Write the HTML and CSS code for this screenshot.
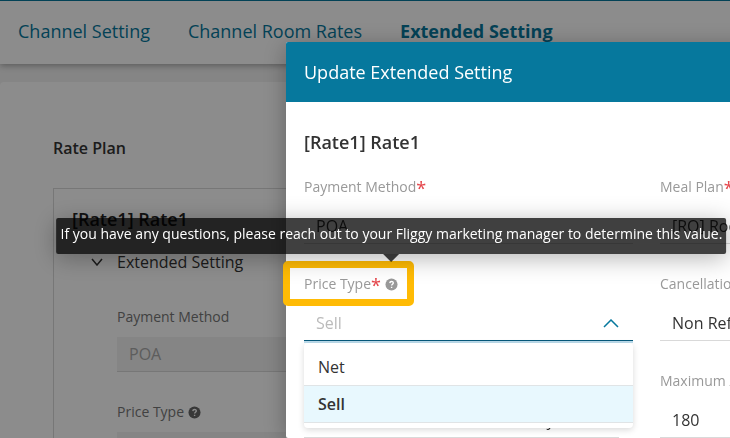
FILE: index.html
```html
<!DOCTYPE html>
<html lang="en">
<head>
    <meta charset="UTF-8">
    <meta name="viewport" content="width=device-width, initial-scale=1.0">
    <title>Extended Setting</title>
    <link rel="stylesheet" href="styles.css">
</head>
<body>
    <nav class="tabs">
        <a href="#channel">Channel Setting</a>
        <a href="#rates">Channel Room Rates</a>
        <a href="#extended" class="active">Extended Setting</a>
    </nav>

    <main class="content">
        <h2 class="section-title">Rate Plan</h2>
        <section class="panel">
            <h3 class="panel-title">[Rate1] Rate1</h3>
            <button type="button" class="collapse">
                <svg width="12" height="8" viewBox="0 0 12 8"><path d="M1 1l5 6 5-6" /></svg>
                Extended Setting
            </button>
            <div class="panel-body">
                <div class="field">
                    <label for="plan-payment">Payment Method</label>
                    <input type="text" id="plan-payment" value="POA" disabled>
                </div>
                <div class="field">
                    <div class="label-row">
                        <label for="plan-price">Price Type</label>
                        <svg class="help" viewBox="0 0 14 14"><circle cx="7" cy="7" r="6.5" /><path d="M5.2 5.5c.1-2.4 3.7-2.3 3.7-.2 0 1.4-1.8 1.4-1.8 2.8M7.1 9.5v1.2" /></svg>
                    </div>
                    <input type="text" id="plan-price" value="Sell" disabled>
                </div>
            </div>
        </section>
    </main>

    <div class="backdrop"></div>

    <!-- Update dialog -->
    <div class="modal" role="dialog" aria-labelledby="modal-title">
        <header class="modal-header">
            <h2 id="modal-title">Update Extended Setting</h2>
        </header>
        <form class="modal-body">
            <h3 class="modal-name">[Rate1] Rate1</h3>
            <div class="grid">
                <div class="field">
                    <label for="payment" class="required">Payment Method</label>
                    <select id="payment"><option>POA</option></select>
                </div>
                <div class="field">
                    <label for="meal" class="required">Meal Plan</label>
                    <select id="meal"><option>[RO] Room Only</option></select>
                </div>
                <div class="field">
                    <div class="label-row highlight">
                        <label for="price" class="required">Price Type</label>
                        <span class="help-wrap">
                            <svg class="help" viewBox="0 0 14 14"><circle cx="7" cy="7" r="6.5" /><path d="M5.2 5.5c.1-2.4 3.7-2.3 3.7-.2 0 1.4-1.8 1.4-1.8 2.8M7.1 9.5v1.2" /></svg>
                            <span class="tooltip" role="tooltip">If you have any questions, please reach out to your Fliggy marketing manager to determine this value.</span>
                        </span>
                    </div>
                    <div class="combo">
                        <input type="text" id="price" placeholder="Sell" role="combobox" aria-expanded="true" aria-controls="price-list">
                        <svg class="combo-arrow" width="16" height="9" viewBox="0 0 16 9"><path d="M1 8l7-7 7 7" /></svg>
                        <div class="options" id="price-list" role="listbox">
                            <button type="button" role="option">Net</button>
                            <button type="button" role="option" class="selected" aria-selected="true">Sell</button>
                        </div>
                    </div>
                </div>
                <div class="field">
                    <label for="cancel" class="required">Cancellation Policy</label>
                    <select id="cancel"><option>Non Refundable</option></select>
                </div>
                <div class="field">
                    <label for="advance">Minimum Advance</label>
                    <div class="split">
                        <input type="text" id="advance">
                        <select aria-label="Unit"><option>Day</option></select>
                    </div>
                </div>
                <div class="field">
                    <label for="maximum">Maximum Advance</label>
                    <input type="text" id="maximum" value="180">
                </div>
            </div>
        </form>
    </div>
</body>
</html>
```
FILE: styles.css
```css
* {
    box-sizing: border-box;
}

body {
    margin: 0;
    height: 100vh;
    overflow: hidden;
    font-family: 'Open Sans', sans-serif;
    font-size: 16px;
    color: #333;
    background-color: #f2f2f2;
}

h2, h3 {
    margin: 0;
    font-weight: 600;
}

svg {
    fill: none;
    stroke: #333;
    stroke-width: 1.5;
}

.tabs {
    display: flex;
    gap: 38px;
    height: 64px;
    padding: 0 18px 4px;
    align-items: center;
    background: #fff;
    border-top: 1px solid #06789d;
    box-shadow: 0 2px 6px rgba(0, 0, 0, 0.3);
}

.tabs a {
    font-size: 18px;
    color: #06789d;
    text-decoration: none;
}

.tabs a.active {
    font-weight: 700;
}

.content {
    margin-top: 18px;
    padding: 54px 53px 0;
    background: #fff;
    border-radius: 4px;
}

.section-title {
    font-size: 16px;
    line-height: 24px;
    color: #333;
}

.panel {
    margin-top: 28px;
    padding: 18px;
    border: 1px solid #d9d9d9;
}

.panel-title {
    font-size: 18px;
    line-height: 24px;
    color: #222;
}

.collapse {
    display: flex;
    align-items: center;
    gap: 14px;
    margin-top: 19px;
    padding: 0 0 0 19px;
    border: none;
    background: none;
    font: inherit;
    line-height: 24px;
    color: #333;
}

.panel-body {
    padding: 33px 0 0 45px;
    display: grid;
    gap: 30px;
}

.field {
    display: flex;
    flex-direction: column;
    gap: 12px;
    min-width: 0;
}

label {
    font-size: 14px;
    line-height: 20px;
    color: #999;
}

.panel label {
    color: #777;
}

.panel .field {
    gap: 10px;
}

.required::after {
    content: "*";
    font-family: 'Noto Sans', sans-serif;
    font-size: 18px;
    line-height: 0;
    vertical-align: -3px;
    color: #e5484d;
}

input, select {
    width: 100%;
    height: 35px;
    padding: 0 12px;
    border: none;
    border-bottom: 1px solid #d9d9d9;
    border-radius: 0;
    background: transparent;
    font: inherit;
    color: #333;
    appearance: none;
    outline: none;
}

input:disabled {
    background: #f2f2f2;
    color: #aaa;
}

input::placeholder {
    color: #bbb;
}

.label-row {
    display: flex;
    align-items: center;
    gap: 4px;
}

.help {
    display: block;
    width: 13px;
    height: 13px;
}

.help circle {
    fill: #999;
    stroke: none;
}

.help path {
    stroke: #fff;
}

.panel .help circle {
    fill: #666;
}

.backdrop {
    position: fixed;
    inset: 0;
    background: rgba(0, 0, 0, 0.45);
}

.modal {
    position: fixed;
    top: 42px;
    bottom: 0;
    left: 286px;
    width: 721px;
    background: #fff;
    border-radius: 2px;
    box-shadow: 0 4px 24px rgba(0, 0, 0, 0.3);
}

.modal-header {
    padding: 18px;
    background: #06789d;
    border-radius: 2px 2px 0 0;
    color: #fff;
}

.modal-header h2, .modal-name {
    font-size: 18px;
    line-height: 24px;
}

.modal-header h2 {
    font-weight: 400;
}

.modal-body {
    padding: 28px 18px 0;
}

.grid {
    display: grid;
    grid-template-columns: 1fr 1fr;
    gap: 30px 27px;
    margin-top: 23px;
}

/* yellow frame drawn around the label */
.highlight {
    position: relative;
    align-self: flex-start;
}

.highlight::before {
    content: "";
    position: absolute;
    inset: -13px -16px -12px -21px;
    border: 7px solid #ffbb05;
    border-radius: 5px;
}

.help-wrap {
    position: relative;
}

.tooltip {
    position: absolute;
    bottom: 37px;
    left: 50%;
    transform: translateX(-50%);
    padding: 6px 4px 10px;
    border-radius: 2px;
    background: rgba(0, 0, 0, 0.75);
    box-shadow: 0 4px 24px rgba(0, 0, 0, 0.3);
    font-size: 14px;
    line-height: 20px;
    white-space: nowrap;
    color: #fff;
    z-index: 2;
}

.tooltip::after {
    content: "";
    position: absolute;
    top: 100%;
    left: 50%;
    margin-left: -8px;
    border: 8px solid transparent;
    border-top-color: rgba(0, 0, 0, 0.75);
    border-bottom: none;
}

.combo {
    position: relative;
}

.combo input {
    display: block;
    border-bottom: 1px solid #06587a;
    box-shadow: 0 2px 0 #bcdcec;
}

.combo-arrow {
    position: absolute;
    top: 13px;
    right: 14px;
    stroke: #06789d;
}

.options {
    position: absolute;
    top: calc(100% + 2px);
    left: 0;
    right: 0;
    padding: 6px 0 5px;
    background: #fff;
    border-radius: 4px;
    box-shadow: 0 2px 6px rgba(0, 0, 0, 0.15);
    z-index: 1;
}

.options button {
    display: block;
    width: 100%;
    height: 37px;
    padding: 0 14px;
    border: none;
    border-bottom: 1px solid #e0e4e6;
    background: #fff;
    font: inherit;
    text-align: left;
    color: #333;
}

.options .selected {
    background: #e8f8fe;
    font-weight: 600;
    color: #333;
}

.split {
    display: flex;
    padding-right: 14px;
}

.split select {
    width: 105px;
    flex-shrink: 0;
}
```
